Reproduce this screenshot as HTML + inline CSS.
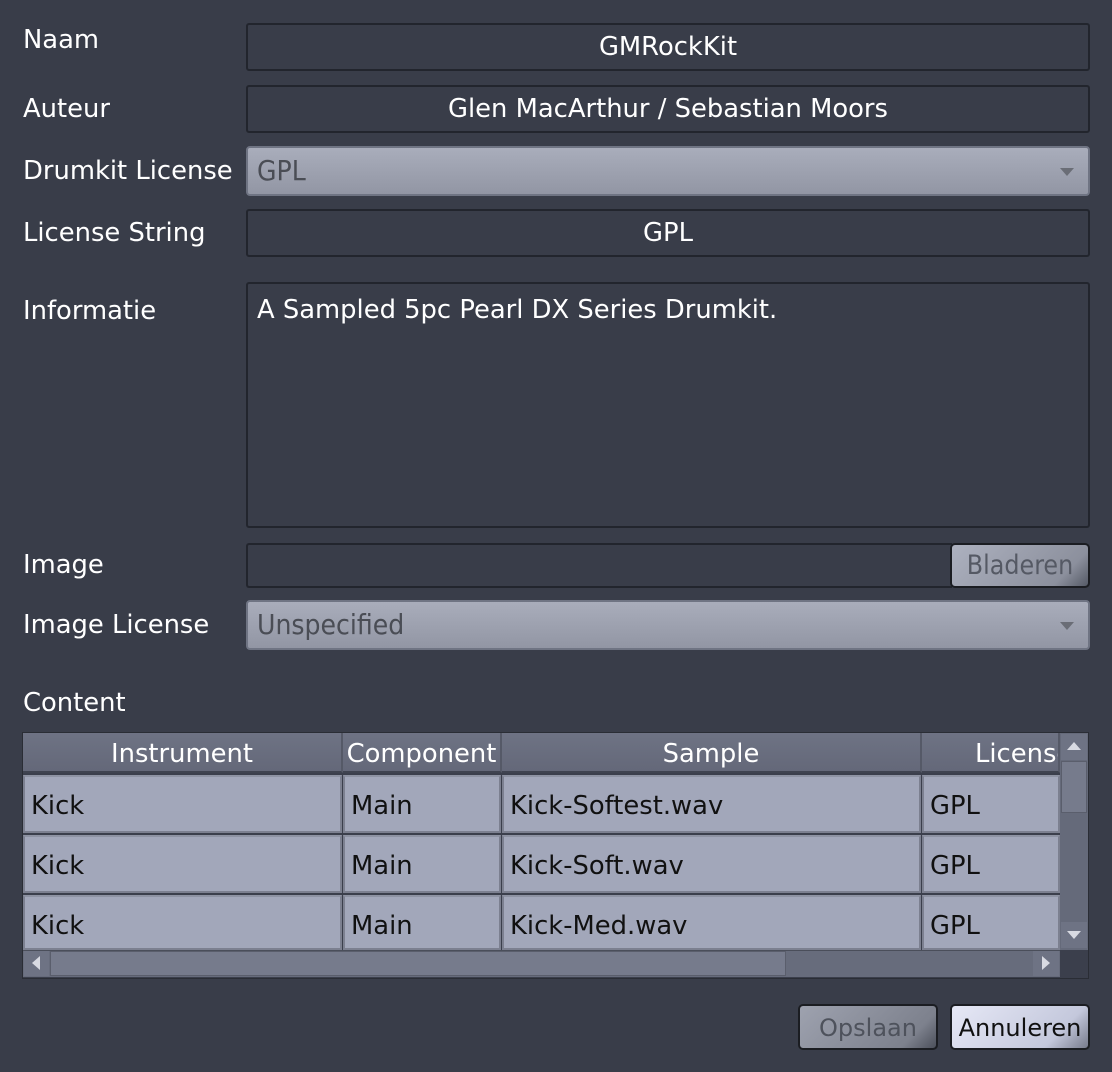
<!DOCTYPE html>
<html><head><style>
*{box-sizing:border-box;margin:0;padding:0}
body{width:1112px;height:1072px;background:#393d49;font-family:"DejaVu Sans","Liberation Sans",sans-serif;font-size:25.8px;color:#fff;position:relative;overflow:hidden}
.a{position:absolute}
.lbl{position:absolute;left:23px;line-height:30px}
.f{position:absolute;left:246px;width:844px;background:#393d49;border:2px solid #22252d;border-radius:3px;text-align:center;line-height:44px}
.cb{position:absolute;left:246px;width:844px;height:50px;border:2px solid #6f7483;border-radius:4px;background:linear-gradient(#a9adbb,#9296a4);color:#4a4d55;padding-left:9px;line-height:46px;font-family:"DejaVu Sans Condensed","DejaVu Sans",sans-serif;font-size:28px}
.cb:after{content:"";position:absolute;right:14px;top:20px;border-left:7px solid transparent;border-right:7px solid transparent;border-top:8px solid #6a6d76}
.h{position:absolute;top:733px;height:40px;background:linear-gradient(#6e7384,#646879);border-right:2px solid #555967;border-bottom:2px solid #3f4350;text-align:center;line-height:42px;color:#fff;white-space:nowrap}
.c{position:absolute;height:58px;background:#a2a7ba;border:2px solid #7c8090;border-top-color:#8e93a3;color:#111;padding-left:6px;line-height:58px;white-space:nowrap}
.btn{position:absolute;border:2px solid #1b1d22;border-radius:5px;text-align:center}
</style></head><body>
<div class="lbl" style="top:25px">Naam</div>
<div class="f" style="top:23px;height:48px">GMRockKit</div>
<div class="lbl" style="top:94px">Auteur</div>
<div class="f" style="top:85px;height:48px">Glen MacArthur / Sebastian Moors</div>
<div class="lbl" style="top:156px">Drumkit License</div>
<div class="cb" style="top:146px">GPL</div>
<div class="lbl" style="top:218px">License String</div>
<div class="f" style="top:209px;height:48px">GPL</div>
<div class="lbl" style="top:296px">Informatie</div>
<div class="f" style="top:282px;height:246px;text-align:left;padding-left:9px;line-height:52px">A Sampled 5pc Pearl DX Series Drumkit.</div>
<div class="lbl" style="top:550px">Image</div>
<div class="f" style="top:543px;height:45px;width:706px;border-right:none;border-radius:3px 0 0 3px"></div>
<div class="btn" style="left:950px;top:543px;width:140px;height:45px;background:linear-gradient(135deg,#adb1bf,#8c909d 80%,#555a66);color:#555964;line-height:41px;font-family:'DejaVu Sans Condensed','DejaVu Sans',sans-serif;font-size:26.5px">Bladeren</div>
<div class="lbl" style="top:610px">Image License</div>
<div class="cb" style="top:600px">Unspecified</div>
<div class="lbl" style="top:688px">Content</div>

<div class="a" style="left:22px;top:732px;width:1067px;height:247px;background:#3b3f4c;border:1px solid #2a2d35"></div>
<div class="h" style="left:23px;width:320px">Instrument</div>
<div class="h" style="left:343px;width:159px;overflow:hidden">Component</div>
<div class="h" style="left:502px;width:420px">Sample</div>
<div class="h" style="left:922px;width:138px;overflow:hidden;text-align:left;padding-left:53px">License</div>
<div class="c" style="left:23px;top:775px;width:319px">Kick</div>
<div class="c" style="left:343px;top:775px;width:158px">Main</div>
<div class="c" style="left:502px;top:775px;width:419px">Kick-Softest.wav</div>
<div class="c" style="left:922px;top:775px;width:138px">GPL</div>
<div class="c" style="left:23px;top:835px;width:319px">Kick</div>
<div class="c" style="left:343px;top:835px;width:158px">Main</div>
<div class="c" style="left:502px;top:835px;width:419px">Kick-Soft.wav</div>
<div class="c" style="left:922px;top:835px;width:138px">GPL</div>
<div class="c" style="left:23px;top:895px;width:319px;height:55px">Kick</div>
<div class="c" style="left:343px;top:895px;width:158px;height:55px">Main</div>
<div class="c" style="left:502px;top:895px;width:419px;height:55px">Kick-Med.wav</div>
<div class="c" style="left:922px;top:895px;width:138px;height:55px">GPL</div>
<!-- vscroll -->
<div class="a" style="left:1060px;top:733px;width:28px;height:217px;background:#656a7a"></div>
<div class="a" style="left:1061px;top:734px;width:26px;height:26px;background:#6e7384"></div>
<div class="a" style="left:1067px;top:742px;border-left:7px solid transparent;border-right:7px solid transparent;border-bottom:8px solid #d8dae2"></div>
<div class="a" style="left:1061px;top:761px;width:26px;height:52px;background:#767b8c;border:1px solid #5a5e6c"></div>
<div class="a" style="left:1061px;top:922px;width:26px;height:26px;background:#6e7384"></div>
<div class="a" style="left:1067px;top:931px;border-left:7px solid transparent;border-right:7px solid transparent;border-top:8px solid #d8dae2"></div>
<!-- hscroll -->
<div class="a" style="left:23px;top:950px;width:1037px;height:27px;background:#676c7c;border-top:1px solid #4a4e5a"></div>
<div class="a" style="left:24px;top:951px;width:25px;height:25px;background:#6e7384"></div>
<div class="a" style="left:32px;top:956px;border-top:7px solid transparent;border-bottom:7px solid transparent;border-right:8px solid #d8dae2"></div>
<div class="a" style="left:50px;top:951px;width:736px;height:25px;background:#767b8c;border:1px solid #5a5e6c"></div>
<div class="a" style="left:1033px;top:951px;width:26px;height:25px;background:#6e7384"></div>
<div class="a" style="left:1042px;top:956px;border-top:7px solid transparent;border-bottom:7px solid transparent;border-left:8px solid #d8dae2"></div>

<div class="btn" style="left:798px;top:1004px;width:140px;height:46px;background:linear-gradient(135deg,#9ea2af,#7d818d 80%,#4c505b);color:#4e525c;line-height:44px;font-size:24px">Opslaan</div>
<div class="btn" style="left:950px;top:1004px;width:140px;height:46px;background:linear-gradient(135deg,#e6e8f6,#c4c8dc 75%,#777b8c);color:#111;line-height:44px;font-size:24px">Annuleren</div>
</body></html>
